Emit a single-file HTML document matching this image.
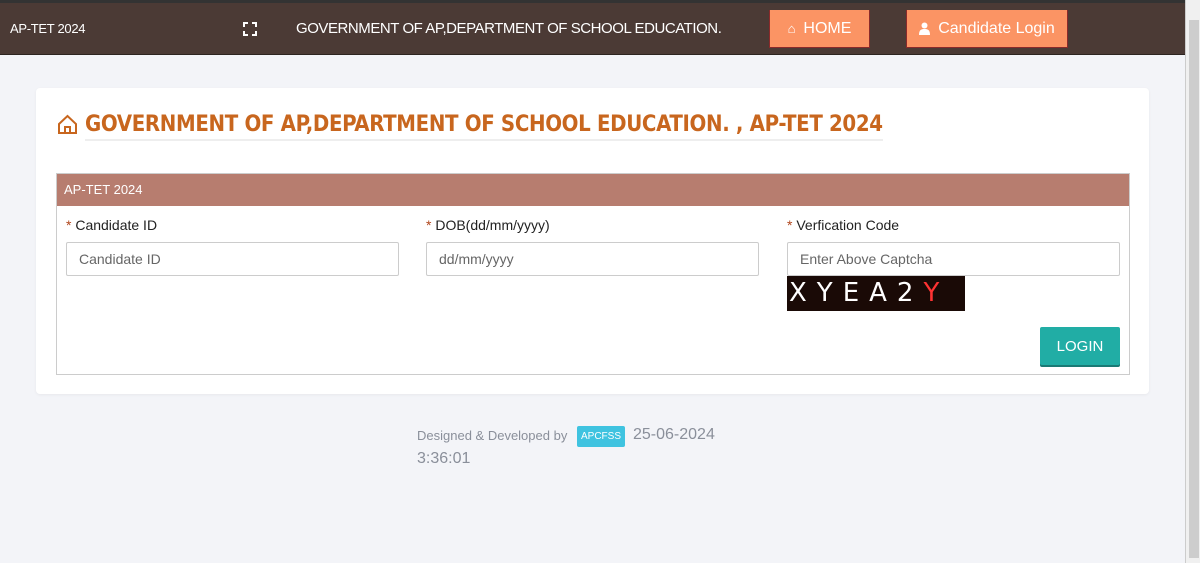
<!DOCTYPE html>
<html><head><meta charset="utf-8"><style>
*{box-sizing:border-box;margin:0;padding:0}
body{width:1200px;height:563px;overflow:hidden;background:#f3f4f8;font-family:"Liberation Sans",sans-serif;position:relative}
.top{position:absolute;left:0;top:0;width:1185px;height:55px;background:#4b3a35;border-top:3px solid #333;border-bottom:1px solid #2d2420}
.abs{position:absolute}
.btn{position:absolute;background:#fb9464;color:#fff;font-size:16px;border:1px solid #8a2a2a;border-top:none;display:flex;align-items:center;justify-content:center;gap:8px}
.sb{position:absolute;right:0;top:0;width:15px;height:563px;background:#f0f0f0;border-left:1px solid #ccc}
.sb div{position:absolute;left:3px;top:20px;width:10px;height:538px;background:#cdcdcd}
.card{position:absolute;left:36px;top:88px;width:1113px;height:306px;background:#fff;border-radius:4px;box-shadow:0 1px 3px rgba(0,0,0,.05)}
.title{position:absolute;left:85px;top:112px;font-family:"DejaVu Sans Condensed","DejaVu Sans",sans-serif;font-weight:bold;font-size:22px;color:#c8661e;letter-spacing:-0.35px;border-bottom:2px solid #eee;padding-bottom:2px;white-space:nowrap}
.panel{position:absolute;left:56px;top:173px;width:1074px;height:202px;border:1px solid #ccc}
.ph{height:32px;background:#b77d6f;color:#fff;font-size:13px;padding:8px 7px}
.lbl{position:absolute;font-size:14px;color:#222}
.lbl b{color:#b0451b;font-weight:normal}
.inp{position:absolute;height:34px;border:1px solid #ccc;border-radius:2px;font-size:14px;color:#666;padding:8px 12px}
</style></head><body>
<div class="top">
<div class="abs" style="left:10px;top:18px;color:#fff;font-size:13px;letter-spacing:-0.3px">AP-TET 2024</div>
<svg class="abs" style="left:243px;top:19px" width="14" height="14" viewBox="0 0 14 14" fill="none" stroke="#fff" stroke-width="2"><path d="M1 5V1h4M9 1h4v4M13 9v4H9M5 13H1V9"/></svg>
<div class="abs" style="left:296px;top:17px;color:#fff;font-size:15px;letter-spacing:-0.45px">GOVERNMENT OF AP,DEPARTMENT OF SCHOOL EDUCATION.</div>
</div>
<div class="btn" style="left:769px;top:10px;width:101px;height:38px"><span style="font-size:13px">&#8962;</span>HOME</div>
<div class="btn" style="left:906px;top:10px;width:162px;height:38px"><svg width="11" height="13" viewBox="0 0 11 13"><circle cx="5.5" cy="3.5" r="3" fill="#fff"/><path d="M0 13c0-5 2-6 5.5-6S11 8 11 13z" fill="#fff"/></svg>Candidate Login</div>
<div class="sb"><div></div></div>
<div class="card"></div>
<svg class="abs" style="left:57px;top:114px" width="21" height="21" viewBox="0 0 21 21" fill="none" stroke="#c8661e" stroke-width="2"><path d="M2 10L10.5 2 19 10v9H2z"/><path d="M8 19v-6h5v6"/></svg>
<div class="title">GOVERNMENT OF AP,DEPARTMENT OF SCHOOL EDUCATION. , AP-TET 2024</div>
<div class="panel"><div class="ph">AP-TET 2024</div></div>
<div class="lbl" style="left:66px;top:217px"><b>*</b> Candidate ID</div>
<div class="lbl" style="left:426px;top:217px"><b>*</b> DOB(dd/mm/yyyy)</div>
<div class="lbl" style="left:787px;top:217px"><b>*</b> Verfication Code</div>
<div class="inp" style="left:66px;top:242px;width:333px">Candidate ID</div>
<div class="inp" style="left:426px;top:242px;width:333px">dd/mm/yyyy</div>
<div class="inp" style="left:787px;top:242px;width:333px">Enter Above Captcha</div>
<div class="abs" style="left:787px;top:276px;width:178px;height:35px;background:#1a0a06;color:#fff;font-family:'DejaVu Sans',sans-serif;font-size:26px;letter-spacing:10px;padding-left:2px;line-height:35px;overflow:hidden">XYEA2<span style="color:#f33">Y</span></div>
<div class="abs" style="left:1040px;top:327px;width:80px;height:38px;background:#21ada5;color:#fff;font-size:15px;display:flex;align-items:center;justify-content:center;border-radius:2px;box-shadow:0 2px 0 #1a7a75">LOGIN</div>
<div class="abs" style="left:417px;top:428px;font-size:13px;color:#8a8f9a">Designed &amp; Developed by</div>
<div class="abs" style="left:577px;top:426px;width:48px;height:21px;background:#3fc3e0;color:#fff;font-size:10px;display:flex;align-items:center;justify-content:center;border-radius:2px">APCFSS</div>
<div class="abs" style="left:633px;top:426px;font-size:16px;color:#8a8f9a">25-06-2024</div>
<div class="abs" style="left:417px;top:450px;font-size:16px;color:#8a8f9a">3:36:01</div>
</body></html>
